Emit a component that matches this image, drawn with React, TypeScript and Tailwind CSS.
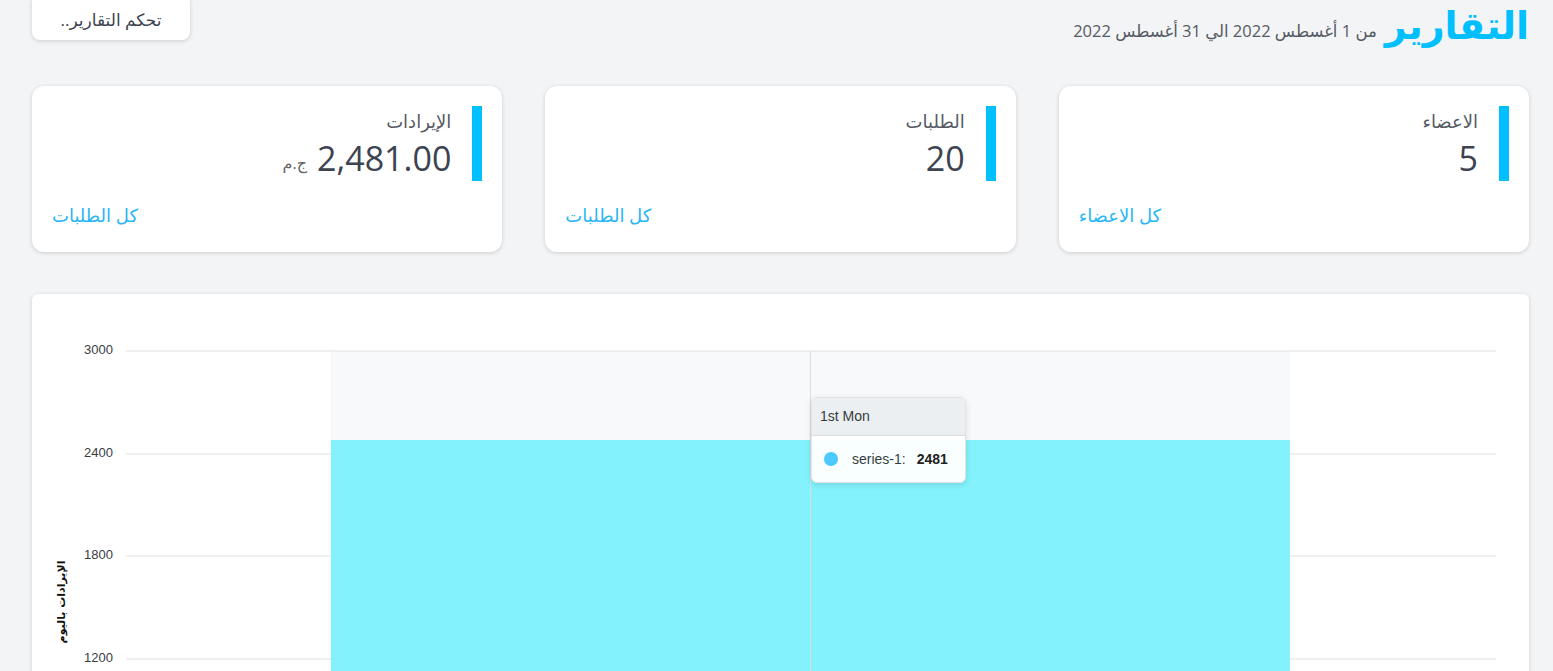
import React from "react";

const font = { fontFamily: '"Open Sans", "DejaVu Sans", sans-serif' };

function StatCard({ label, value, unit, link }: { label: string; value: string; unit?: string; link: string }) {
  return (
    <div className="bg-white rounded-xl shadow-[0_1px_4px_rgba(0,0,0,0.16)] h-[166px] px-5 pt-5 flex flex-col">
      <div className="flex flex-row gap-[21px]">
        <div className="w-[10px] h-[75px] bg-[#00bfff]" />
        <div className="flex flex-col items-start">
          <div className="text-[18px] leading-[26px] text-[#555a64] mt-[2px]">{label}</div>
          <div className="flex flex-row items-end gap-[10px] mt-[3px]">
            <span className="text-[34px] leading-[42px] text-[#3d4350]">{value}</span>
            {unit && <span className="text-[16px] leading-[20px] text-[#666] mb-[6px]">{unit}</span>}
          </div>
        </div>
      </div>
      <div className="mt-[22px] self-end text-[18px] leading-[24px] text-[#29b6f6]">{link}</div>
    </div>
  );
}

export default function App() {
  const gridYs = [57, 160, 262, 365];
  const labels = ["3000", "2400", "1800", "1200"];
  return (
    <div dir="rtl" style={font} className="bg-[#f3f4f6] pr-6 pl-8 overflow-hidden h-[671px]">
      <div className="flex flex-row items-start justify-between h-[86px]">
        <div className="flex flex-row items-end gap-2">
          <h1 className="text-[38px] leading-[48px] font-bold text-[#00bfff]">التقارير</h1>
          <span className="text-[16.5px] leading-[24px] text-[#555a64] mb-[5px]">من 1 أغسطس 2022 الي 31 أغسطس 2022</span>
        </div>
        <button className="bg-white rounded-lg shadow-[0_1px_4px_rgba(0,0,0,0.16)] h-[46px] -mt-[6px] w-[158px] pt-[6px] text-[17px] text-[#3d4350]">
          تحكم التقارير..
        </button>
      </div>

      <div className="grid grid-cols-3 gap-[43px]">
        <StatCard label="الاعضاء" value="5" link="كل الاعضاء" />
        <StatCard label="الطلبات" value="20" link="كل الطلبات" />
        <StatCard label="الإيرادات" value="2,481.00" unit="ج.م" link="كل الطلبات" />
      </div>

      <div className="mt-[42px] bg-white rounded-md shadow-[0_1px_4px_rgba(0,0,0,0.16)] h-[420px] relative" dir="ltr">
        <svg width="1497" height="420" className="block" style={{ fontFamily: '"Liberation Sans", "DejaVu Sans", sans-serif' }}>
          <rect x="299" y="57" width="959" height="89" fill="#f8f9fa" />
          {gridYs.map((y, i) => (
            <g key={y}>
              <line x1="94" x2="1464" y1={y} y2={y} stroke="#e0e0e0" strokeWidth="1" />
              <text x="81" y={y + 3} textAnchor="end" fontSize="13" fill="#373d3f">{labels[i]}</text>
            </g>
          ))}
          <rect x="299" y="146" width="959" height="280" fill="#78f1fc" fillOpacity="0.92" />
          <line x1="778.5" x2="778.5" y1="57" y2="420" stroke="#d8dde2" strokeWidth="1" />
          <text
            x="33"
            y="308"
            transform="rotate(-90 33 308)"
            textAnchor="middle"
            fontSize="11"
            fontWeight="bold"
            fill="#111"
            direction="rtl"
            style={{ fontFamily: '"DejaVu Sans", sans-serif' }}
          >
            الإيرادات باليوم
          </text>
        </svg>
        <div className="absolute left-[779px] top-[103px] w-[155px] rounded-md border border-[#e3e3e3] bg-white/95 shadow-[0_2px_6px_rgba(0,0,0,0.12)] overflow-hidden" style={{ fontFamily: '"Liberation Sans", sans-serif' }}>
          <div className="h-[38px] bg-[#eceff1] border-b border-[#dddddd] px-[8px] flex items-center text-[14px] text-[#373d3f]">1st Mon</div>
          <div className="h-[46px] flex items-center px-[12px] text-[14px] text-[#373d3f]">
            <span className="w-[14px] h-[14px] rounded-full bg-[#4cc9ff] mr-[14px]" />
            <span>series-1:</span>
            <span className="ml-[11px] font-bold text-[#222]">2481</span>
          </div>
        </div>
      </div>
    </div>
  );
}
